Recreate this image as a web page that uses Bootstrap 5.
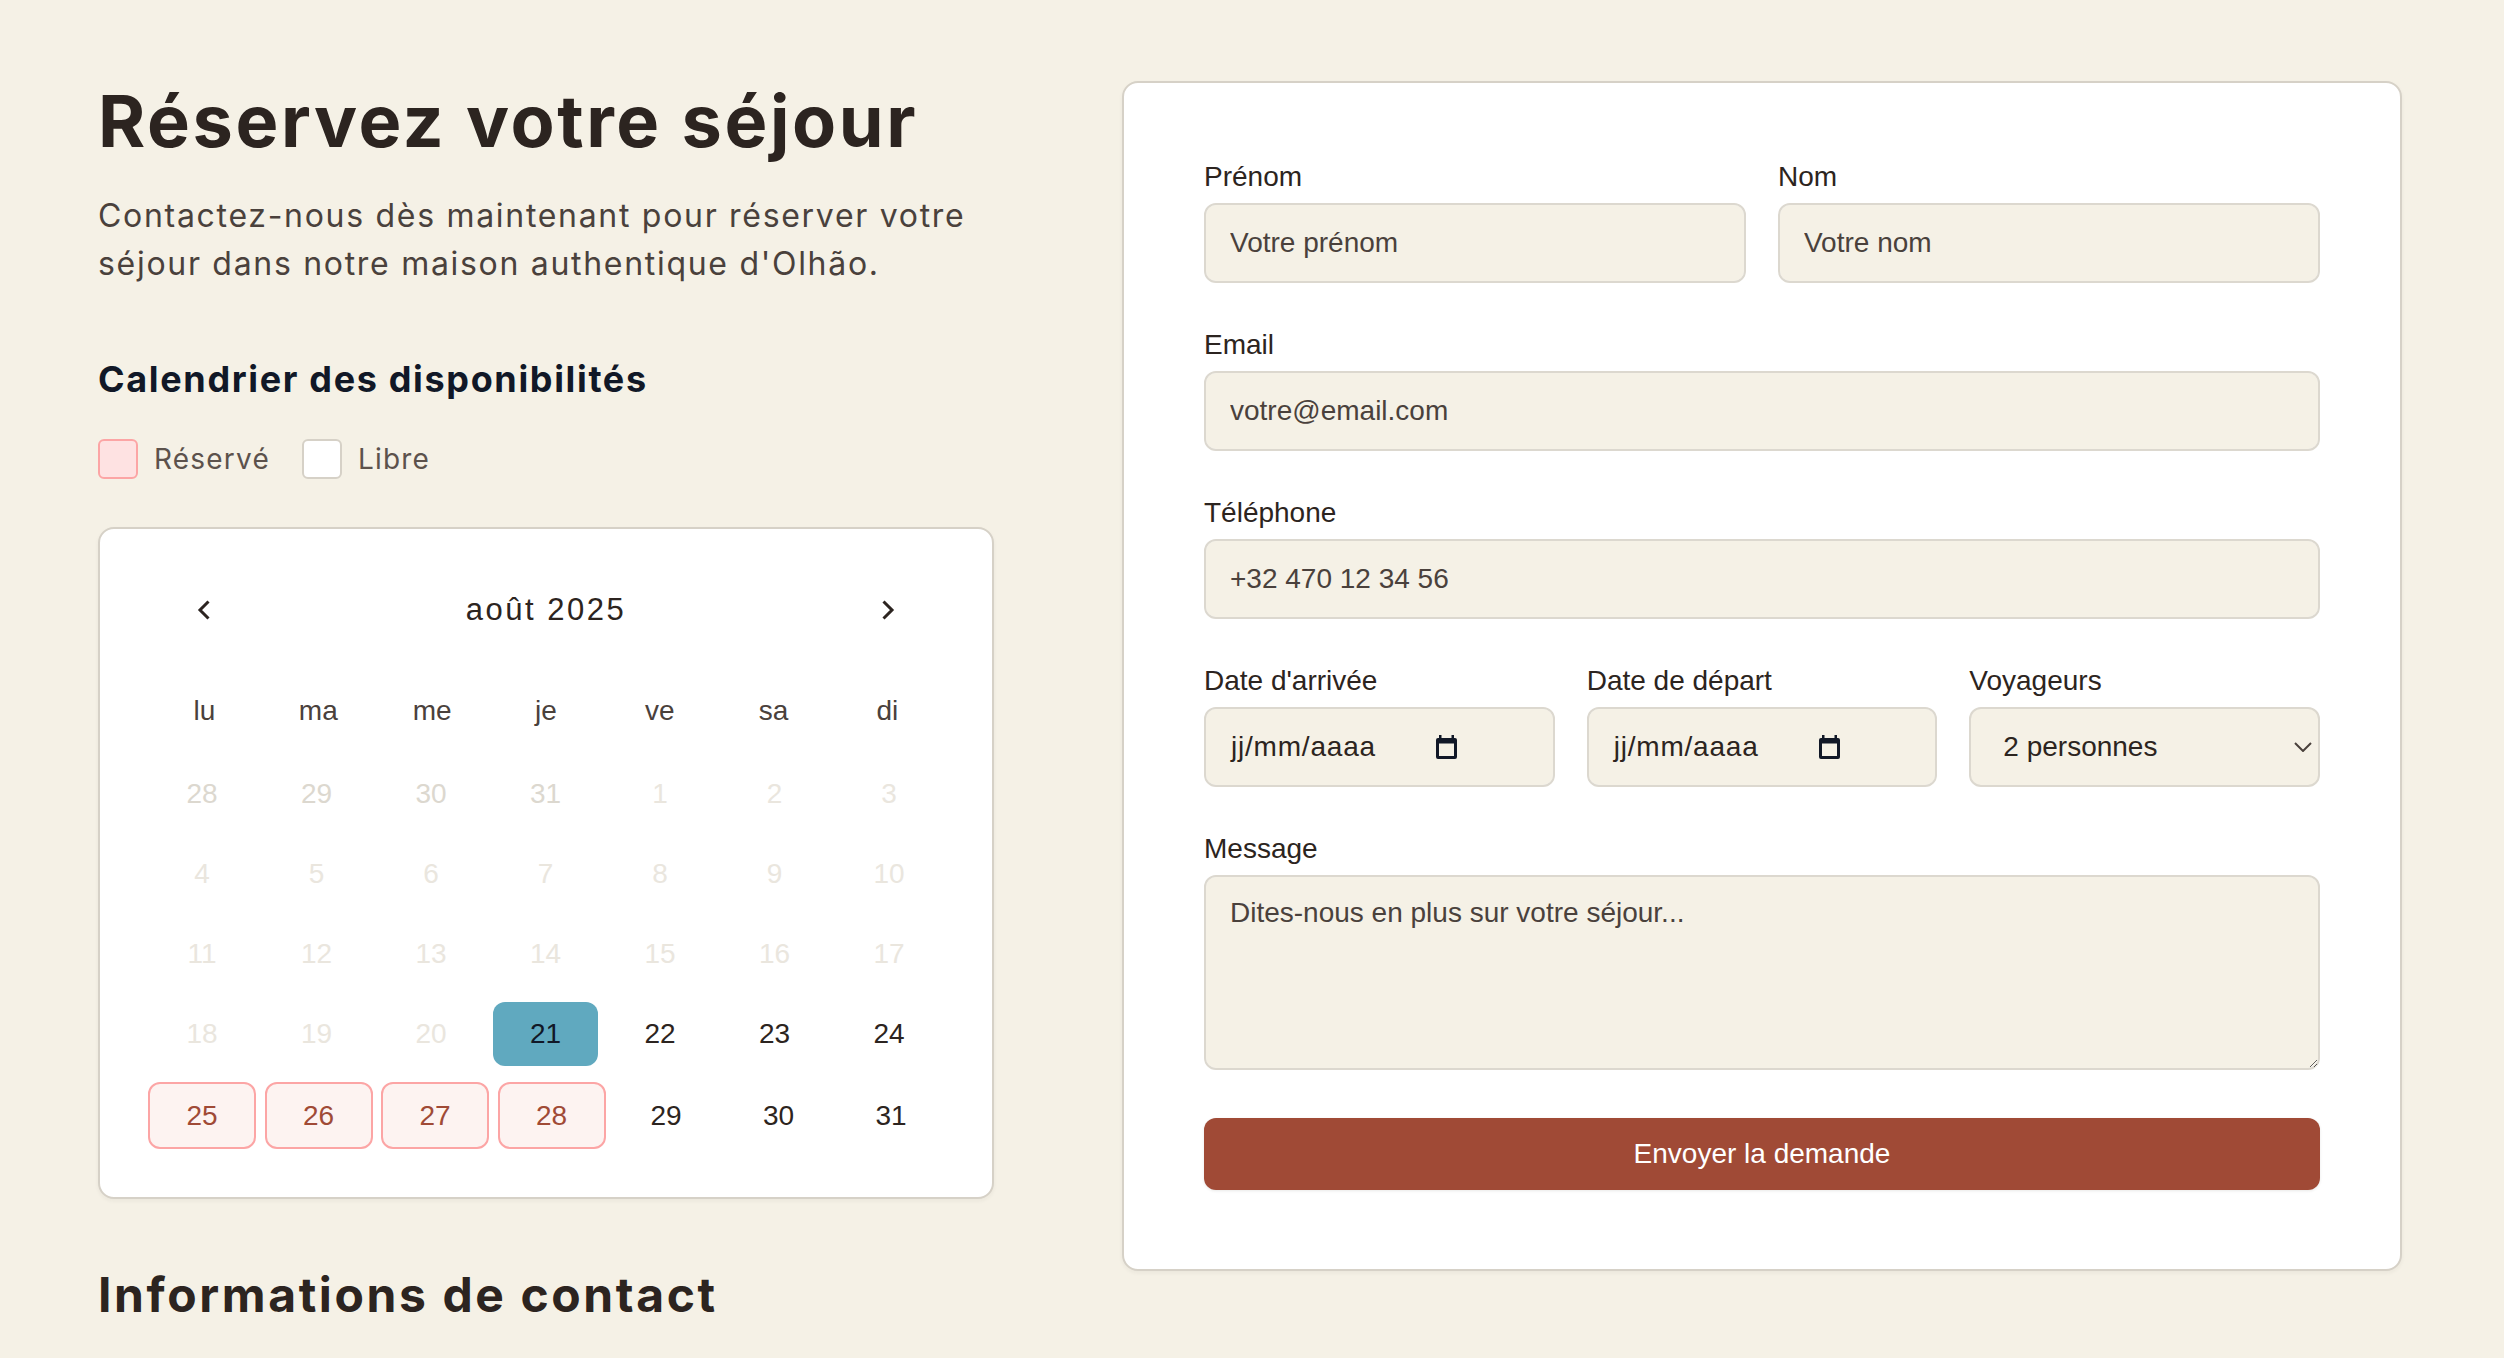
<!DOCTYPE html>
<html lang="fr">
  <head>
    <meta charset="UTF-8" />
    <meta name="viewport" content="width=device-width, initial-scale=1.0" />
    <title>Réservez votre séjour</title>
    <link href="https://cdn.jsdelivr.net/npm/bootstrap@5.3.0/dist/css/bootstrap.min.css" rel="stylesheet" />
    <style>
      body {
        background: #f5f1e6;
        color: #2c2420;
        font-family: "Liberation Sans", Arial, sans-serif;
        font-size: 28px;
        overflow: hidden;
      }
      .page-wrap {
        display: grid;
        grid-template-columns: 896px 1280px;
        column-gap: 128px;
        padding: 81px 0 0 98px;
      }
      .title-main,
      .title-contact,
      .title-cal,
      .intro-text,
      .legend-text {
        font-family: Inter, sans-serif;
      }
      .title-main {
        font-size: 72px;
        font-weight: 700;
        line-height: 76px;
        letter-spacing: 2.6px;
        margin: 2px 0 33px;
      }
      .intro-text {
        font-size: 32px;
        line-height: 48px;
        letter-spacing: 1.7px;
        color: #4a413c;
        margin: 0 0 67px;
      }
      .title-cal {
        font-size: 36px;
        font-weight: 700;
        line-height: 48px;
        letter-spacing: 1.65px;
        color: #111827;
        margin: 0 0 35px;
      }
      .legend-row {
        display: flex;
        align-items: center;
        gap: 32px;
        margin-bottom: 47px;
      }
      .swatch {
        display: block;
        width: 40px;
        height: 40px;
        border-radius: 6px;
        border: 2px solid #d6d1c7;
        background: #fff;
      }
      .swatch-booked {
        background: #fee2e2;
        border-color: #fca5a5;
      }
      .legend-text {
        font-size: 28px;
        letter-spacing: 1.2px;
        color: #5c524c;
      }
      .panel {
        background: #fff;
        border: 2px solid #d6d1c7;
        border-radius: 16px;
        box-shadow: 0 2px 4px rgba(44, 36, 32, 0.05);
      }
      .cal-panel {
        height: 672px;
        padding: 50px 48px 0;
      }
      .cal-head {
        height: 62px;
        padding: 0 48px;
      }
      .cal-month {
        font-size: 31px;
        letter-spacing: 2.5px;
      }
      .weekdays,
      .week {
        display: grid;
        align-items: center;
        text-align: center;
      }
      .weekdays {
        grid-template-columns: repeat(7, 105px);
        column-gap: 8.8px;
        margin: 39px 0 20px 4px;
        height: 62px;
        color: #4a413c;
      }
      .week {
        grid-template-columns: repeat(7, 105px);
        column-gap: 9.5px;
        height: 64px;
        margin: 0 0 16px 1.5px;
      }
      .week-last {
        grid-template-columns: repeat(4, 108px) repeat(3, 104px);
        column-gap: 8.5px;
        height: 67px;
        margin-left: 0;
      }
      .day-off {
        color: #eae6de;
      }
      .day-past {
        color: #dcd8cf;
      }
      .day-today {
        background: #60a9bf;
        border-radius: 12px;
        line-height: 64px;
        color: #111827;
      }
      .day-booked {
        background: #fdf3f1;
        border: 2px solid #fca5a5;
        border-radius: 12px;
        color: #a04a36;
        line-height: 63px;
      }
      .title-contact {
        font-size: 48px;
        font-weight: 700;
        line-height: 60px;
        letter-spacing: 2.6px;
        margin: 66px 0 0;
      }
      .form-panel {
        height: 1190px;
        padding: 80px;
      }
      .form-grid {
        display: grid;
        grid-template-columns: repeat(6, 1fr);
        gap: 48px 32px;
      }
      .span-3 {
        grid-column: span 3;
      }
      .span-2 {
        grid-column: span 2;
      }
      .span-6 {
        grid-column: span 6;
      }
      .field-label {
        display: block;
        line-height: 28px;
        margin-bottom: 12px;
      }
      .form-control,
      .form-select {
        height: 80px;
        background-color: #f5f1e6;
        border: 2px solid #dcd8cf;
        border-radius: 12px;
        font-size: 28px;
        color: #2c2420;
        padding: 0 24px;
        box-shadow: none;
      }
      .form-control::placeholder {
        color: #4a413c;
        opacity: 1;
      }
      textarea.form-control {
        height: 195px;
        padding: 15px 24px;
      }
      .date-field {
        display: flex;
        align-items: center;
        letter-spacing: 0.8px;
      }
      .date-field span {
        margin-left: 1px;
      }
      .date-field svg {
        margin-left: 60px;
      }
      .form-select {
        padding-left: 32px;
        background-image: url("data:image/svg+xml,%3csvg xmlns='http://www.w3.org/2000/svg' viewBox='0 0 18 10'%3e%3cpath fill='none' stroke='%234a413c' stroke-width='2' d='M1 1l8 8 8-8'/%3e%3c/svg%3e");
        background-position: right 6px center;
        background-size: 18px 10px;
      }
      .btn-send {
        display: block;
        width: 100%;
        height: 72px;
        margin-top: 48px;
        background: #a04a36;
        border: 0;
        border-radius: 12px;
        color: #fff;
        font-size: 28px;
        box-shadow: 0 1px 3px rgba(44, 36, 32, 0.1);
      }
    </style>
  </head>
  <body>
    <div class="page-wrap">
      <div>
        <h1 class="title-main">Réservez votre séjour</h1>
        <p class="intro-text">Contactez-nous dès maintenant pour réserver votre<br />séjour dans notre maison authentique d'Olhão.</p>
        <h2 class="title-cal">Calendrier des disponibilités</h2>
        <div class="legend-row">
          <div class="d-flex align-items-center gap-3">
            <span class="swatch swatch-booked"></span>
            <span class="legend-text">Réservé</span>
          </div>
          <div class="d-flex align-items-center gap-3">
            <span class="swatch"></span>
            <span class="legend-text">Libre</span>
          </div>
        </div>

        <div class="panel cal-panel">
          <div class="cal-head d-flex align-items-center justify-content-between">
            <svg width="16" height="24" viewBox="0 0 16 24" fill="none" stroke="#2c2420" stroke-width="3"><path d="M12.500 3.500 4 12l8.500 8.500" /></svg>
            <span class="cal-month">août 2025</span>
            <svg width="16" height="24" viewBox="0 0 16 24" fill="none" stroke="#2c2420" stroke-width="3"><path d="M3.500 3.500 12 12l-8.500 8.500" /></svg>
          </div>
          <div class="weekdays">
            <span>lu</span><span>ma</span><span>me</span><span>je</span><span>ve</span><span>sa</span><span>di</span>
          </div>
          <div id="calWeeks"></div>
        </div>

        <h2 class="title-contact">Informations de contact</h2>
      </div>

      <div class="panel form-panel">
        <form class="form-grid">
          <div class="span-3">
            <label class="field-label" for="prenom">Prénom</label>
            <input class="form-control" id="prenom" type="text" placeholder="Votre prénom" />
          </div>
          <div class="span-3">
            <label class="field-label" for="nom">Nom</label>
            <input class="form-control" id="nom" type="text" placeholder="Votre nom" />
          </div>
          <div class="span-6">
            <label class="field-label" for="email">Email</label>
            <input class="form-control" id="email" type="email" placeholder="votre@email.com" />
          </div>
          <div class="span-6">
            <label class="field-label" for="tel">Téléphone</label>
            <input class="form-control" id="tel" type="tel" placeholder="+32 470 12 34 56" />
          </div>
          <div class="span-2">
            <label class="field-label">Date d'arrivée</label>
            <div class="form-control date-field">
              <span>jj/mm/aaaa</span>
              <svg width="21" height="24" viewBox="0 0 21 24"><path fill="#111827" d="M3 0h2.500v3h10V0H18v3h1a2 2 0 0 1 2 2v17a2 2 0 0 1-2 2H2a2 2 0 0 1-2-2V5a2 2 0 0 1 2-2h1V0Zm0 8.500V21h15V8.500H3Z" /></svg>
            </div>
          </div>
          <div class="span-2">
            <label class="field-label">Date de départ</label>
            <div class="form-control date-field">
              <span>jj/mm/aaaa</span>
              <svg width="21" height="24" viewBox="0 0 21 24"><path fill="#111827" d="M3 0h2.500v3h10V0H18v3h1a2 2 0 0 1 2 2v17a2 2 0 0 1-2 2H2a2 2 0 0 1-2-2V5a2 2 0 0 1 2-2h1V0Zm0 8.500V21h15V8.500H3Z" /></svg>
            </div>
          </div>
          <div class="span-2">
            <label class="field-label" for="voyageurs">Voyageurs</label>
            <select class="form-select" id="voyageurs">
              <option>1 personne</option>
              <option selected>2 personnes</option>
              <option>3 personnes</option>
              <option>4 personnes</option>
            </select>
          </div>
          <div class="span-6">
            <label class="field-label" for="message">Message</label>
            <textarea class="form-control" id="message" placeholder="Dites-nous en plus sur votre séjour..."></textarea>
          </div>
        </form>
        <button class="btn-send" type="button">Envoyer la demande</button>
      </div>
    </div>

    <script src="https://cdn.jsdelivr.net/npm/bootstrap@5.3.0/dist/js/bootstrap.bundle.min.js"></script>
    <script>
      // Weeks of the month, each day with its state class
      const weeks = [
        [["28", "day-past"], ["29", "day-past"], ["30", "day-past"], ["31", "day-past"], ["1", "day-off"], ["2", "day-off"], ["3", "day-off"]],
        [["4", "day-off"], ["5", "day-off"], ["6", "day-off"], ["7", "day-off"], ["8", "day-off"], ["9", "day-off"], ["10", "day-off"]],
        [["11", "day-off"], ["12", "day-off"], ["13", "day-off"], ["14", "day-off"], ["15", "day-off"], ["16", "day-off"], ["17", "day-off"]],
        [["18", "day-off"], ["19", "day-off"], ["20", "day-off"], ["21", "day-today"], ["22", ""], ["23", ""], ["24", ""]],
        [["25", "day-booked"], ["26", "day-booked"], ["27", "day-booked"], ["28", "day-booked"], ["29", ""], ["30", ""], ["31", ""]],
      ];
      const calWeeks = document.getElementById("calWeeks");
      weeks.forEach((week, index) => {
        const row = document.createElement("div");
        row.className = index === 4 ? "week week-last" : "week";
        week.forEach(([label, state]) => {
          const cell = document.createElement("div");
          cell.textContent = label;
          cell.className = state;
          row.appendChild(cell);
        });
        calWeeks.appendChild(row);
      });
    </script>
  </body>
</html>
